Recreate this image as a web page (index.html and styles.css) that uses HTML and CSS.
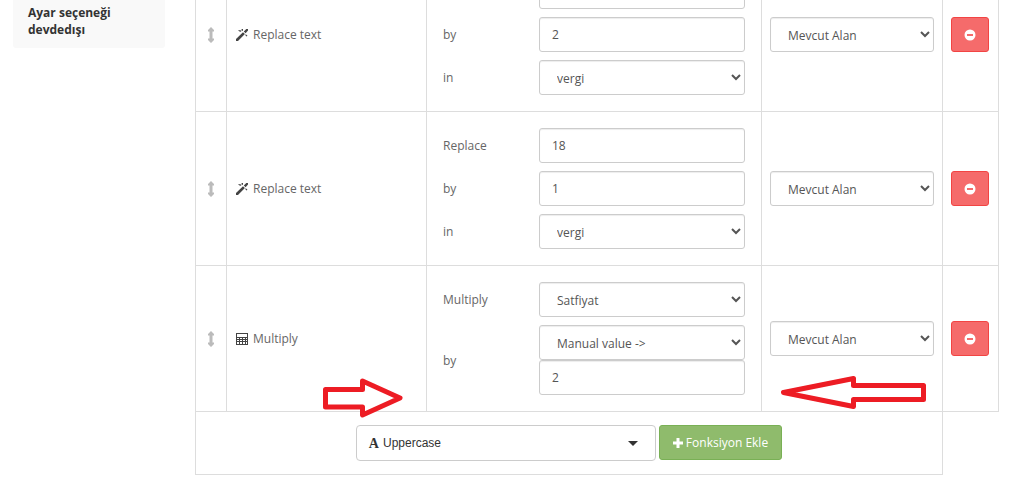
FILE: index.html
```html
<!DOCTYPE html>
<html lang="tr">
<head>
<meta charset="utf-8">
<title>Fonksiyonlar</title>
<link rel="stylesheet" href="styles.css">
</head>
<body>
<svg class="sprite" aria-hidden="true">
  <symbol id="move" viewBox="0 0 8 16"><path d="M4 0 7 3V4.500H5.500V11.500H7V13L4 16 1 13V11.500H2.500V4.500H1V3Z"/></symbol>
  <symbol id="wand" viewBox="0 0 12 12"><path d="M0 10 7 3.200 8.900 5 2 12H0ZM7.800 2.500 10.300 0H12V1.600L9.600 4.200ZM2 1 5.500 1.500 5 2.800 3.500 2.500ZM5.500 0H7V2L5.800 1.600ZM9.800 5.200 11.500 6.800 10.500 7.500 9.200 6Z"/></symbol>
  <symbol id="calc" viewBox="0 0 12 12"><path fill-rule="evenodd" d="M0 0H12V12H0ZM1 1V4H11V1ZM1 5V6H3V5ZM4 5V6H6V5ZM7 5V6H9V5ZM10 5V6H11V5ZM1 7V8H3V7ZM4 7V8H6V7ZM7 7V8H9V7ZM10 7V8H11V7ZM1 9V11H3V9ZM4 9V11H6V9ZM7 9V11H9V9ZM10 9V11H11V9Z"/></symbol>
  <symbol id="minus" viewBox="0 0 12 12"><path fill-rule="evenodd" d="M6 .5A5.500 5.500 0 1 1 6 11.500 5.500 5.500 0 0 1 6 .5ZM3 5V7H9V5Z"/></symbol>
  <symbol id="plus" viewBox="0 0 10 10"><path d="M3.500 0H6.500V3.500H10V6.500H6.500V10H3.500V6.500H0V3.500H3.500Z"/></symbol>
</svg>
<div class="page">
  <aside class="sidebar"><strong>Ayar seçeneği devdedışı</strong></aside>
  <main class="content">
    <table class="rules">
      <colgroup><col class="col-move"><col class="col-name"><col><col class="col-field"><col class="col-delete"></colgroup>
      <tbody>
        <tr>
          <td class="handle"><svg class="icon-move"><use href="#move"/></svg></td>
          <td><span class="name"><svg class="icon"><use href="#wand"/></svg>Replace text</span></td>
          <td class="options"><div class="params">
            <input class="control value-only" type="text" aria-label="Replace">
            <label for="r1b">by</label><input class="control" id="r1b" type="text" value="2">
            <label for="r1c">in</label><select class="control" id="r1c"><option>vergi</option></select>
          </div></td>
          <td><select class="control" aria-label="Alan"><option>Mevcut Alan</option></select></td>
          <td><button class="btn delete" type="button" aria-label="Sil"><svg class="icon"><use href="#minus"/></svg></button></td>
        </tr>
        <tr>
          <td class="handle"><svg class="icon-move"><use href="#move"/></svg></td>
          <td><span class="name"><svg class="icon"><use href="#wand"/></svg>Replace text</span></td>
          <td class="options"><div class="params">
            <label for="r2a">Replace</label><input class="control" id="r2a" type="text" value="18">
            <label for="r2b">by</label><input class="control" id="r2b" type="text" value="1">
            <label for="r2c">in</label><select class="control" id="r2c"><option>vergi</option></select>
          </div></td>
          <td><select class="control" aria-label="Alan"><option>Mevcut Alan</option></select></td>
          <td><button class="btn delete" type="button" aria-label="Sil"><svg class="icon"><use href="#minus"/></svg></button></td>
        </tr>
        <tr>
          <td class="handle"><svg class="icon-move"><use href="#move"/></svg></td>
          <td><span class="name"><svg class="icon"><use href="#calc"/></svg>Multiply</span></td>
          <td class="options"><div class="params">
            <label for="r3a">Multiply</label><select class="control" id="r3a"><option>Satfiyat</option></select>
            <label for="r3b">by</label><div class="stack"><select class="control" id="r3b"><option>Manual value -&gt;</option></select><input class="control" type="text" value="2" aria-label="Manual value"></div>
          </div></td>
          <td><select class="control" aria-label="Alan"><option>Mevcut Alan</option></select></td>
          <td><button class="btn delete" type="button" aria-label="Sil"><svg class="icon"><use href="#minus"/></svg></button></td>
        </tr>
        <tr>
          <td colspan="4"><div class="add-row">
            <button class="picker" type="button"><span class="letter">A</span><span class="picked">Uppercase</span><span class="caret"></span></button>
            <button class="btn add" type="button"><svg class="icon-plus"><use href="#plus"/></svg>Fonksiyon Ekle</button>
          </div></td>
          <td class="blank"></td>
        </tr>
      </tbody>
    </table>
    <svg class="arrow arrow-right" viewBox="322 377 82 42"><path d="M325.500 389.500H362.500V381L400 398 362.500 415V407H325.500Z"/></svg>
    <svg class="arrow arrow-left" viewBox="780 375 148 36"><path d="M923.500 385.500H853.500V378.500L783.500 392.500 853.500 406.500V399.500H923.500Z"/></svg>
  </main>
</div>
</body>
</html>
```
FILE: styles.css
```css
* { box-sizing: border-box; }
body {
  margin: 0;
  background: #fff;
  color: #666;
  font: 12px/17px "Open Sans", sans-serif;
}
.sprite { position: absolute; width: 0; height: 0; }
.page {
  display: flex;
  align-items: flex-start;
  gap: 30px;
  padding: 0 34px 0 13px;
}
.sidebar {
  flex: 0 0 152px;
  padding: 4px 15px 10px;
  background: #f9f9f9;
  border-radius: 0 0 3px 3px;
  color: #333;
}
.content { position: relative; flex: 1; margin-top: -43px; }
.rules { width: 100%; table-layout: fixed; border-collapse: collapse; }
.rules td { border: 1px solid #ddd; padding: 8px; vertical-align: middle; }
.rules .blank { border: 0; }
.col-move { width: 31px; }
.col-name { width: 200px; }
.col-field { width: 181px; }
.col-delete { width: 56px; }
.rules .handle { padding: 0; text-align: center; }
.rules .options { padding: 16px; }
.icon-move { display: block; width: 8px; height: 16px; margin: 0 auto; fill: #bbb; }
.icon { display: block; width: 12px; height: 12px; fill: currentColor; }
.name { display: flex; align-items: center; gap: 5px; padding-left: 1px; }
.name .icon { fill: #444; }
.params { display: grid; grid-template-columns: 88px 1fr; gap: 8px; align-items: center; }
.value-only { grid-column: 2; }
.control {
  display: block;
  width: 100%;
  height: 35px;
  margin: 0;
  padding: 6px 12px;
  border: 1px solid #ccc;
  border-radius: 3px;
  background-color: #fff;
  box-shadow: inset 0 1px 1px rgba(0, 0, 0, .075);
  color: #555;
  font: inherit;
}
select.control { padding: 8px 0 6px 13px; }
.btn {
  display: flex;
  align-items: center;
  justify-content: center;
  height: 35px;
  margin: 0;
  border: 1px solid;
  border-radius: 3px;
  color: #fff;
  font: inherit;
}
.delete { width: 38px; padding: 0; background: #f56b6b; border-color: #f24443; }
.add-row { display: flex; justify-content: center; align-items: flex-start; gap: 3px; padding: 5px 0; }
.add { gap: 3px; padding: 0 13px; background: #8fbb6c; border-color: #79b055; }
.icon-plus { width: 10px; height: 10px; fill: currentColor; }
.picker {
  display: flex;
  align-items: center;
  gap: 4px;
  width: 300px;
  height: 36px;
  padding: 0 17px 0 12px;
  border: 1px solid #ccc;
  border-radius: 4px;
  background: #fff;
  color: #333;
  font: 12px/17px "Liberation Sans", sans-serif;
}
.letter { font: bold 14px/17px "Liberation Serif", serif; }
.picked { flex: 1; text-align: left; }
.caret { border: 5px solid transparent; border-top-color: #333; border-bottom: 0; }
.arrow { position: absolute; fill: none; stroke: #ed1c24; stroke-width: 5; stroke-linejoin: round; }
.arrow-right { left: 127px; bottom: 56px; width: 82px; height: 42px; }
.arrow-left { right: 71px; bottom: 64px; width: 148px; height: 36px; }
```
